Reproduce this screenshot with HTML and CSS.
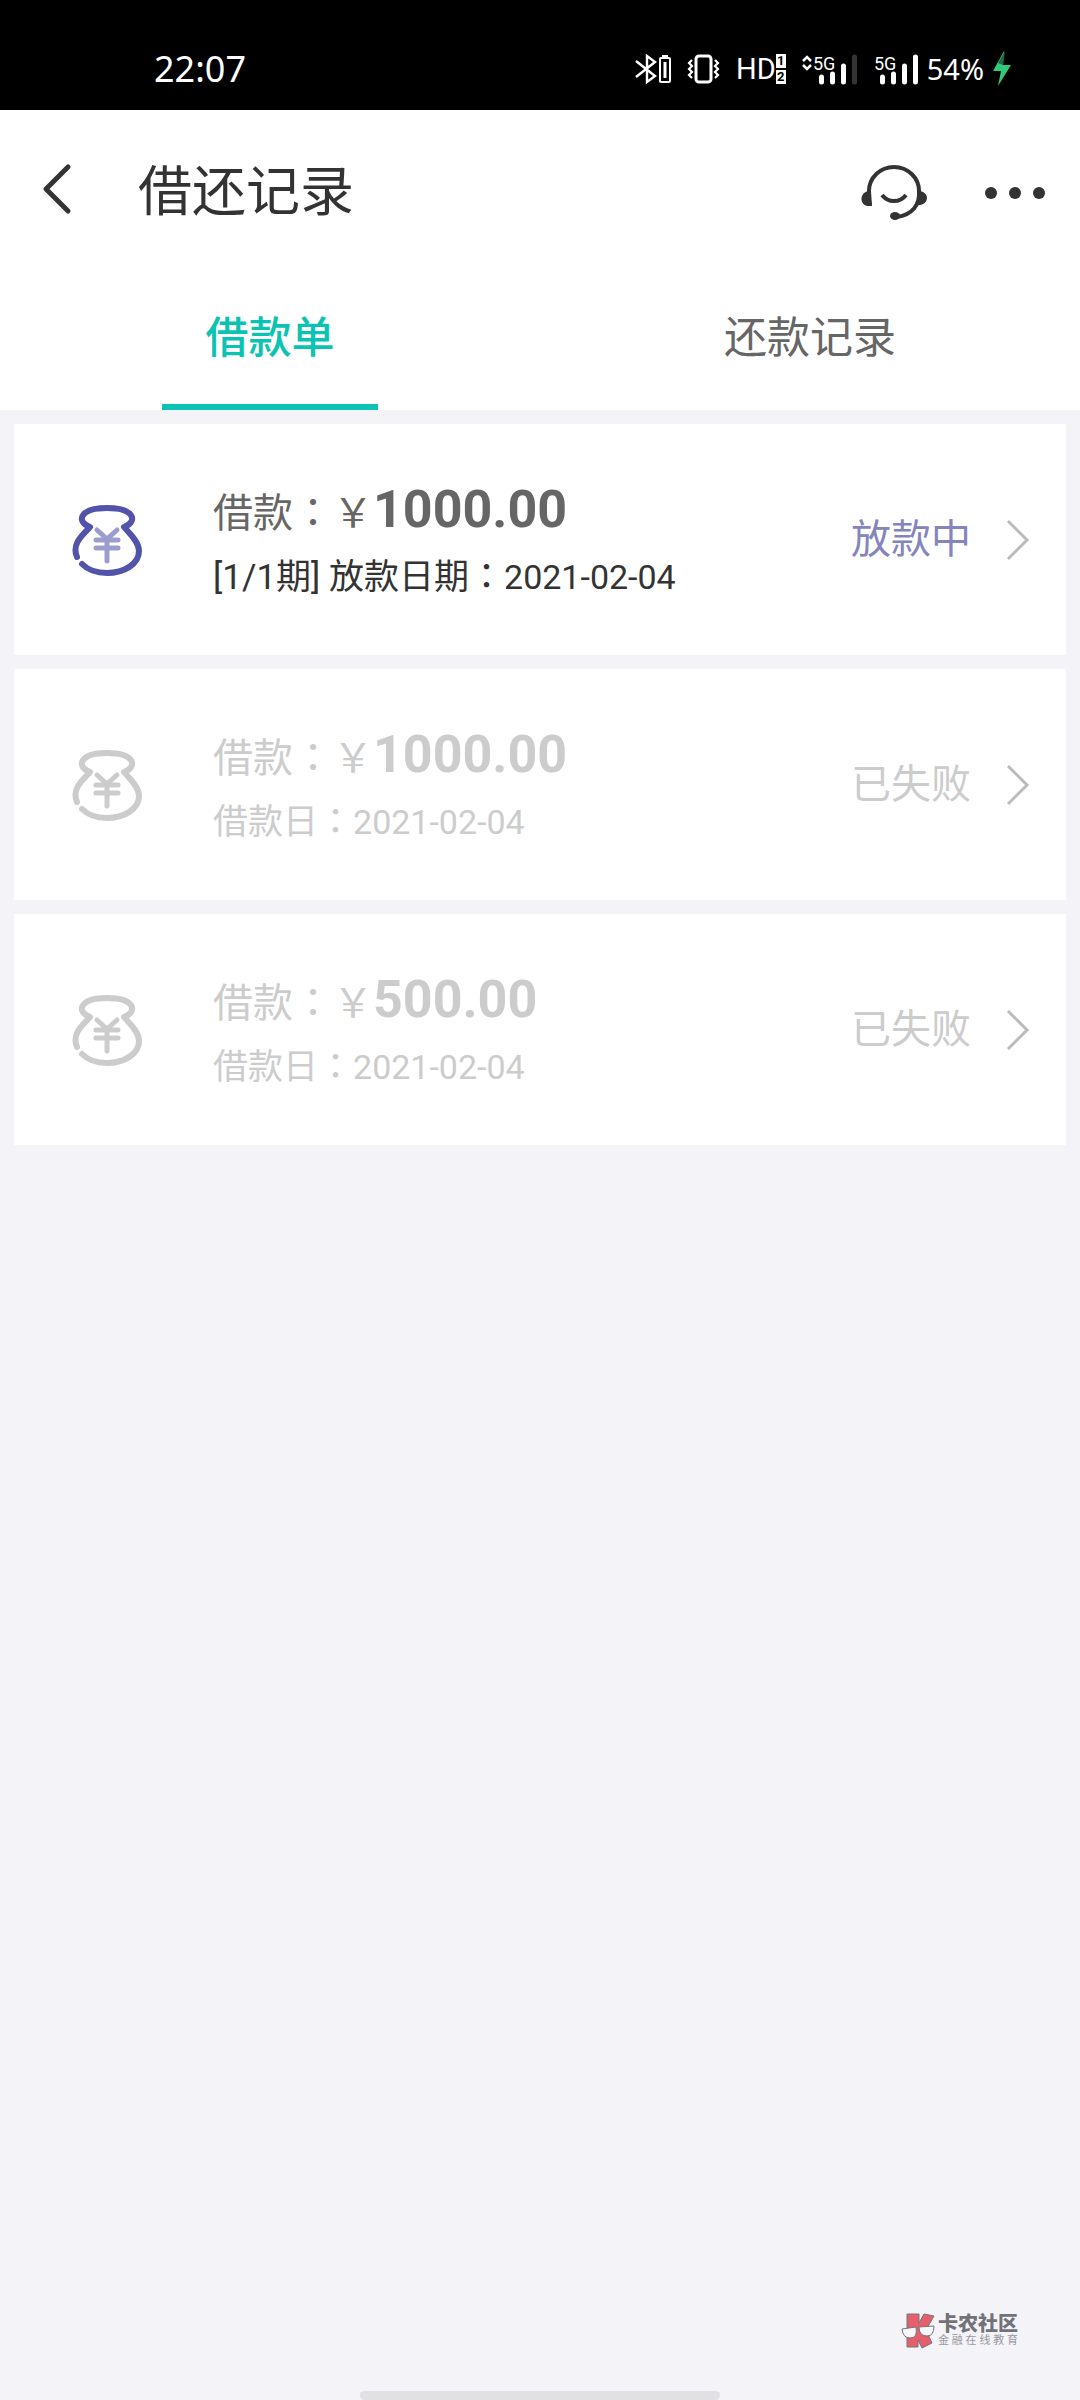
FILE: index.html
```html
<!DOCTYPE html>
<html lang="zh-CN">
<head>
<meta charset="utf-8">
<meta name="viewport" content="width=device-width, initial-scale=1">
<title>借还记录</title>
<link rel="stylesheet" href="styles.css">
</head>
<body>
<svg class="defs" width="0" height="0" aria-hidden="true">
  <symbol id="bag" viewBox="0 0 72 72">
    <g fill="none" stroke-width="6" stroke-linecap="round" stroke-linejoin="round">
      <path class="bag-line" d="M6 53C0 39 13 30 19 23C5 18 8 4 36 4S67 18 53 23C57 28 68 37 68 47C68 60 53 69 36 69C27 69 17 66 11 60"/>
      <path class="bag-yen" stroke-width="5" d="M26 26L36 35L46 26M25 36H47M25 44H47M36 36V57"/>
    </g>
  </symbol>
  <symbol id="chevron" viewBox="0 0 24 42">
    <path d="M2 2L21 21L2 40" fill="none" stroke="currentColor" stroke-width="3"/>
  </symbol>
</svg>

<div class="status">
  <time class="clock">22:07</time>
  <div class="status-icons">
    <svg width="36" height="30" viewBox="0 0 36 30" fill="none" stroke="#fff" stroke-width="2.4" aria-hidden="true">
      <path d="M1 7L20 22L12 28V2L20 8L1 23"/>
      <rect x="25" y="4" width="10" height="24" rx="1" stroke-width="2"/>
      <path d="M27 2H33" stroke-width="2"/>
      <path d="M30 8V24" stroke-width="3"/>
    </svg>
    <svg width="33" height="30" viewBox="0 0 33 30" fill="none" stroke="#fff" aria-hidden="true">
      <rect x="9" y="2" width="15" height="26" rx="3" stroke-width="3"/>
      <path d="M5 6L2 9L5 12L2 15L5 18L2 21L5 24M28 6L31 9L28 12L31 15L28 18L31 21L28 24" stroke-width="2.2"/>
    </svg>
    <span class="hd"><span>HD</span><span class="sims"><b>1</b><b>2</b></span></span>
    <svg width="56" height="36" viewBox="0 0 56 36" aria-hidden="true">
      <path d="M1 10L5 6L9 10M1 14L5 18L9 14" fill="none" stroke="#fff" stroke-width="2.5"/>
      <text class="net" x="11" y="19">5G</text>
      <path d="M19.500 26V31M30.500 23V31M41.500 15V31" stroke="#fff" stroke-width="5" stroke-linecap="round"/>
      <path d="M52.500 6V31" stroke="#333" stroke-width="5" stroke-linecap="round"/>
    </svg>
    <div class="battery">
      <svg width="45" height="36" viewBox="0 0 45 36" aria-hidden="true">
        <text class="net" x="0" y="19">5G</text>
        <path d="M8.500 26V31M19.500 23V31M30.500 15V31M41.500 6V31" stroke="#fff" stroke-width="5" stroke-linecap="round"/>
      </svg>
      <span class="percent">54%</span>
      <svg width="20" height="36" viewBox="0 0 20 36" aria-hidden="true">
        <path d="M12 0L1 20H9L6 35L19 14H11Z" fill="#2fcb7b"/>
        <path d="M13 0L6 12L11 14Z" fill="#1d6a43"/>
      </svg>
    </div>
  </div>
</div>

<header class="top">
  <div class="bar">
    <button class="icon-button back" type="button" aria-label="返回">
      <svg width="30" height="52" viewBox="0 0 30 52"><path d="M26 4L4 26L26 48" fill="none" stroke="#333" stroke-width="5" stroke-linecap="round" stroke-linejoin="round"/></svg>
    </button>
    <h1 class="title">借还记录</h1>
    <div class="actions">
      <button class="icon-button" type="button" aria-label="客服">
        <svg width="66" height="56" viewBox="0 0 66 56" fill="none" stroke="#333" stroke-width="4">
          <path d="M9 40C7 34 8 30 8 26A25 24 0 0 1 58 26C59 40 51 50 36 52"/>
          <path d="M21 30C27 38 39 38 45 30"/>
          <path d="M8 26C-2 27-2 41 8 41H11L10 26ZM58 26L55 40C68 42 70 27 58 26Z" fill="#333" stroke="none"/>
          <ellipse cx="34" cy="51" rx="5" ry="4" fill="#333" stroke="none"/>
        </svg>
      </button>
      <button class="icon-button" type="button" aria-label="更多">
        <svg width="60" height="12" viewBox="0 0 60 12" fill="#333"><circle cx="6" cy="6" r="6"/><circle cx="30" cy="6" r="6"/><circle cx="54" cy="6" r="6"/></svg>
      </button>
    </div>
  </div>
  <div class="tabs" role="tablist">
    <button class="tab tab-active" type="button" role="tab" aria-selected="true">借款单</button>
    <button class="tab" type="button" role="tab" aria-selected="false">还款记录</button>
  </div>
</header>

<main class="records">
  <a class="card card-active" href="#record-1">
    <svg class="bag" width="72" height="72" aria-hidden="true"><use href="#bag"/></svg>
    <div class="info">
      <div class="amount">借款<span class="colon" lang="zh-TW">：</span>￥<strong>1000.00</strong></div>
      <div class="date">[1/1期] 放款日期<span class="colon" lang="zh-TW">：</span><time>2021-02-04</time></div>
    </div>
    <span class="state">放款中</span>
    <svg class="chevron" width="24" height="42" aria-hidden="true"><use href="#chevron"/></svg>
  </a>
  <a class="card" href="#record-2">
    <svg class="bag" width="72" height="72" aria-hidden="true"><use href="#bag"/></svg>
    <div class="info">
      <div class="amount">借款<span class="colon" lang="zh-TW">：</span>￥<strong>1000.00</strong></div>
      <div class="date">借款日<span class="colon" lang="zh-TW">：</span><time>2021-02-04</time></div>
    </div>
    <span class="state">已失败</span>
    <svg class="chevron" width="24" height="42" aria-hidden="true"><use href="#chevron"/></svg>
  </a>
  <a class="card" href="#record-3">
    <svg class="bag" width="72" height="72" aria-hidden="true"><use href="#bag"/></svg>
    <div class="info">
      <div class="amount">借款<span class="colon" lang="zh-TW">：</span>￥<strong>500.00</strong></div>
      <div class="date">借款日<span class="colon" lang="zh-TW">：</span><time>2021-02-04</time></div>
    </div>
    <span class="state">已失败</span>
    <svg class="chevron" width="24" height="42" aria-hidden="true"><use href="#chevron"/></svg>
  </a>
</main>

<footer class="foot">
  <div class="brand">
    <svg width="34" height="36" viewBox="0 0 34 36" aria-hidden="true">
      <path d="M6 1H18V10L23 1L33 3L25 17L31 30L21 35L17 27V34H6Z" fill="#e4606d" stroke="#77747b" stroke-width="1"/>
      <path d="M1 16L15 14Q17 25 9 25Q2 25 1 16ZM18 14L33 13Q33 23 26 23Q18 23 18 14Z" fill="#f7f7fa" stroke="#77747b" stroke-width="1"/>
    </svg>
    <div class="brand-text">
      <div class="brand-name">卡农社区</div>
      <div class="brand-sub">金融在线教育</div>
    </div>
  </div>
  <div class="home-bar"></div>
</footer>
</body>
</html>
```
FILE: styles.css
```css
* { box-sizing: border-box; }
body {
  margin: 0;
  min-height: 100vh;
  display: flex;
  flex-direction: column;
  background: #f3f3f8;
  color: #333;
  font-family: Roboto, "Noto Sans CJK SC", sans-serif;
}
svg { display: block; flex: none; }
.defs { position: absolute; }
button {
  border: 0;
  padding: 0;
  background: none;
  font: inherit;
  color: inherit;
}

.status {
  height: 110px;
  padding: 27px 68px 0 154px;
  display: flex;
  align-items: center;
  justify-content: space-between;
  background: #000;
  color: #fff;
}
.clock { font-family: "Noto Sans", sans-serif; font-size: 36px; }
.status-icons { display: flex; align-items: center; gap: 16px; }
.hd {
  display: flex;
  align-items: center;
  font-size: 29px;
  line-height: 32px;
}
.sims { display: grid; gap: 2px; }
.sims b {
  width: 10px;
  height: 14px;
  background: #fff;
  color: #000;
  font-size: 13px;
  line-height: 14px;
  text-align: center;
}
.net { font-size: 18px; fill: #fff; }
.battery { display: flex; align-items: center; gap: 8px; }
.percent { font-family: "Noto Sans", sans-serif; font-size: 29px; line-height: 36px; }

.top { background: #fff; }
.bar {
  height: 160px;
  padding: 6px 35px 0 42px;
  display: flex;
  align-items: center;
}
.icon-button { display: flex; }
.back { padding-bottom: 8px; }
.title {
  margin: 0 0 0 66px;
  flex: 1;
  font-size: 54px;
  font-weight: 400;
  line-height: 64px;
}
.actions { display: flex; align-items: center; gap: 58px; }
.tabs { display: flex; height: 140px; }
.tab {
  flex: 1;
  display: flex;
  flex-direction: column;
  align-items: center;
  justify-content: space-between;
  padding-top: 36px;
  font-size: 43px;
  line-height: 64px;
  color: #666;
}
.tab::after { content: ""; width: 40%; height: 6px; }
.tab-active { color: #0ac3b2; font-weight: 500; }
.tab-active::after { background: #0ac3b2; }

.records {
  flex: 1;
  padding: 14px;
  display: flex;
  flex-direction: column;
  gap: 14px;
}
.card {
  --bag-line: #ccc;
  --bag-yen: #ccc;
  padding: 44px 36px 44px 57px;
  display: flex;
  align-items: center;
  background: #fff;
  color: #ccc;
  text-decoration: none;
}
.card-active {
  --bag-line: #5353ac;
  --bag-yen: #9c9ccf;
  color: #666;
}
.bag-line { stroke: var(--bag-line); }
.bag-yen { stroke: var(--bag-yen); }
.info { flex: 1; margin-left: 70px; padding-top: 15px; }
.amount { font-size: 40px; line-height: 62px; }
.amount strong { font-size: 52px; font-weight: 700; line-height: 1; }
.date { font-size: 35px; line-height: 66px; }
.date time { font-size: 34px; line-height: 1; }
.card-active .date { color: #333; }
.colon { font-family: "Noto Sans CJK TC", sans-serif; line-height: 1; }
.state { font-size: 40px; line-height: 60px; }
.card-active .state { color: #8585bd; }
.chevron { margin-left: 35px; color: #bbb; }

.foot { display: flex; flex-direction: column; }
.brand {
  align-self: flex-end;
  margin-right: 62px;
  display: flex;
  align-items: center;
  gap: 3px;
}
.brand-name {
  font-size: 20px;
  font-weight: 900;
  line-height: 20px;
  color: #747279;
}
.brand-sub {
  font-size: 11px;
  line-height: 14px;
  color: #99979e;
  text-align-last: justify;
}
.home-bar {
  width: 360px;
  height: 9px;
  margin: 42px auto 0;
  border-radius: 5px;
  background: #e1e1e3;
}
```
